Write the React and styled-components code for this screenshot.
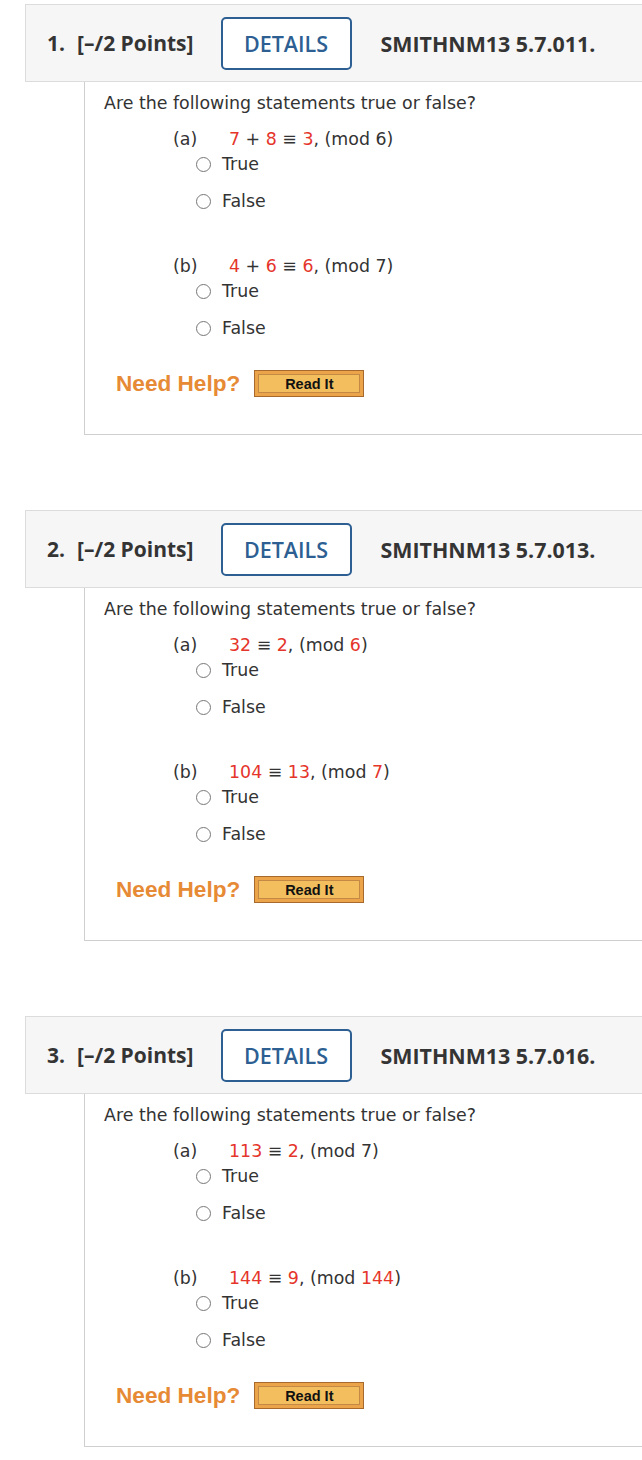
import React from "react";
import styled, { createGlobalStyle } from "styled-components";

const GlobalStyle = createGlobalStyle`
  html, body { margin: 0; padding: 0; background: #fff; }
  body { overflow-x: hidden; }
`;

const Page = styled.div`
  padding-top: 4px;
  overflow: hidden;
  width: 100%;
`;

const Question = styled.section`
  margin-left: 25px;
  margin-right: -30px;
  margin-bottom: 75px;
`;

const Header = styled.div`
  display: flex;
  align-items: center;
  box-sizing: border-box;
  height: 78px;
  background: #f6f6f6;
  border: 1px solid #dcdcdc;
  padding-left: 21px;
  font-family: "Open Sans", sans-serif;
  color: #343434;
`;

const Num = styled.span`
  font-size: 21px;
  font-weight: 700;
  width: 30px;
`;

const Points = styled.span`
  font-size: 21px;
  font-weight: 700;
`;

const DetailsButton = styled.button`
  margin-left: 27px;
  width: 131px;
  height: 53px;
  box-sizing: border-box;
  border: 2px solid #2d5f93;
  border-radius: 5px;
  background: #fff;
  color: #2d5f93;
  font-family: "Open Sans", sans-serif;
  font-size: 21.5px;
  font-weight: 600;
  padding: 0;
`;

const Code = styled.span`
  margin-left: 29px;
  font-size: 21.4px;
  font-weight: 700;
`;

const Body = styled.div`
  margin-left: 59px;
  border-left: 1px solid #cfcfcf;
  border-bottom: 1px solid #cfcfcf;
  padding: 11px 0 37px 19px;
  font-family: "DejaVu Sans", Verdana, sans-serif;
  font-size: 17.4px;
  color: #333;
`;

const Prompt = styled.div`
  line-height: 20px;
`;

const Parts = styled.div`
  display: flex;
  flex-direction: column;
  gap: 45px;
  margin-top: 16px;
  padding-left: 69px;
`;

const Part = styled.div``;

const PartLine = styled.div`
  display: flex;
  line-height: 20px;
`;

const PartLabel = styled.span`
  width: 56px;
`;

const Red = styled.span`
  color: #e5352b;
`;

const Options = styled.div`
  display: flex;
  flex-direction: column;
  gap: 17px;
  margin-top: 5px;
  padding-left: 23px;
`;

const Option = styled.label`
  display: flex;
  align-items: center;
  line-height: 20px;
`;

const Radio = styled.span`
  width: 15px;
  height: 15px;
  box-sizing: border-box;
  border: 1px solid #777;
  border-radius: 50%;
  background: #fff;
  margin-right: 11px;
`;

const HelpRow = styled.div`
  display: flex;
  align-items: center;
  margin-top: 32px;
  padding-left: 12px;
`;

const NeedHelp = styled.span`
  font-family: "Liberation Sans", Arial, sans-serif;
  font-weight: 700;
  font-size: 22.6px;
  color: #e68a35;
  margin-right: 14px;
`;

const ReadIt = styled.button`
  width: 110px;
  height: 27px;
  box-sizing: border-box;
  padding: 3px;
  border: 1px solid #a86a2c;
  background: #eca44a;
  display: flex;
`;

const ReadItInner = styled.span`
  flex: 1;
  display: flex;
  align-items: center;
  justify-content: center;
  border: 1px solid #c48a45;
  background: #f3bf5e;
  font-family: "Liberation Sans", Arial, sans-serif;
  font-weight: 700;
  font-size: 14.5px;
  color: #111;
`;

const questions = [
  {
    n: 1,
    code: "SMITHNM13 5.7.011.",
    parts: [
      { label: "(a)", expr: [["r", "7"], ["t", " + "], ["r", "8"], ["t", " ≡ "], ["r", "3"], ["t", ", (mod 6)"]] },
      { label: "(b)", expr: [["r", "4"], ["t", " + "], ["r", "6"], ["t", " ≡ "], ["r", "6"], ["t", ", (mod 7)"]] },
    ],
  },
  {
    n: 2,
    code: "SMITHNM13 5.7.013.",
    parts: [
      { label: "(a)", expr: [["r", "32"], ["t", " ≡ "], ["r", "2"], ["t", ", (mod "], ["r", "6"], ["t", ")"]] },
      { label: "(b)", expr: [["r", "104"], ["t", " ≡ "], ["r", "13"], ["t", ", (mod "], ["r", "7"], ["t", ")"]] },
    ],
  },
  {
    n: 3,
    code: "SMITHNM13 5.7.016.",
    parts: [
      { label: "(a)", expr: [["r", "113"], ["t", " ≡ "], ["r", "2"], ["t", ", (mod 7)"]] },
      { label: "(b)", expr: [["r", "144"], ["t", " ≡ "], ["r", "9"], ["t", ", (mod "], ["r", "144"], ["t", ")"]] },
    ],
  },
];

const ExprText = styled.span`
  white-space: pre;
`;

function Expr({ items }) {
  return (
    <ExprText>
      {items.map(([k, v], i) => (k === "r" ? <Red key={i}>{v}</Red> : <React.Fragment key={i}>{v}</React.Fragment>))}
    </ExprText>
  );
}

export default function App() {
  return (
    <>
      <GlobalStyle />
      <Page>
        {questions.map((q) => (
          <Question key={q.n}>
            <Header>
              <Num>{q.n}.</Num>
              <Points>[–/2 Points]</Points>
              <DetailsButton>DETAILS</DetailsButton>
              <Code>{q.code}</Code>
            </Header>
            <Body>
              <Prompt>Are the following statements true or false?</Prompt>
              <Parts>
                {q.parts.map((p) => (
                  <Part key={p.label}>
                    <PartLine>
                      <PartLabel>{p.label}</PartLabel>
                      <Expr items={p.expr} />
                    </PartLine>
                    <Options>
                      <Option><Radio />True</Option>
                      <Option><Radio />False</Option>
                    </Options>
                  </Part>
                ))}
              </Parts>
              <HelpRow>
                <NeedHelp>Need Help?</NeedHelp>
                <ReadIt><ReadItInner>Read It</ReadItInner></ReadIt>
              </HelpRow>
            </Body>
          </Question>
        ))}
      </Page>
    </>
  );
}
